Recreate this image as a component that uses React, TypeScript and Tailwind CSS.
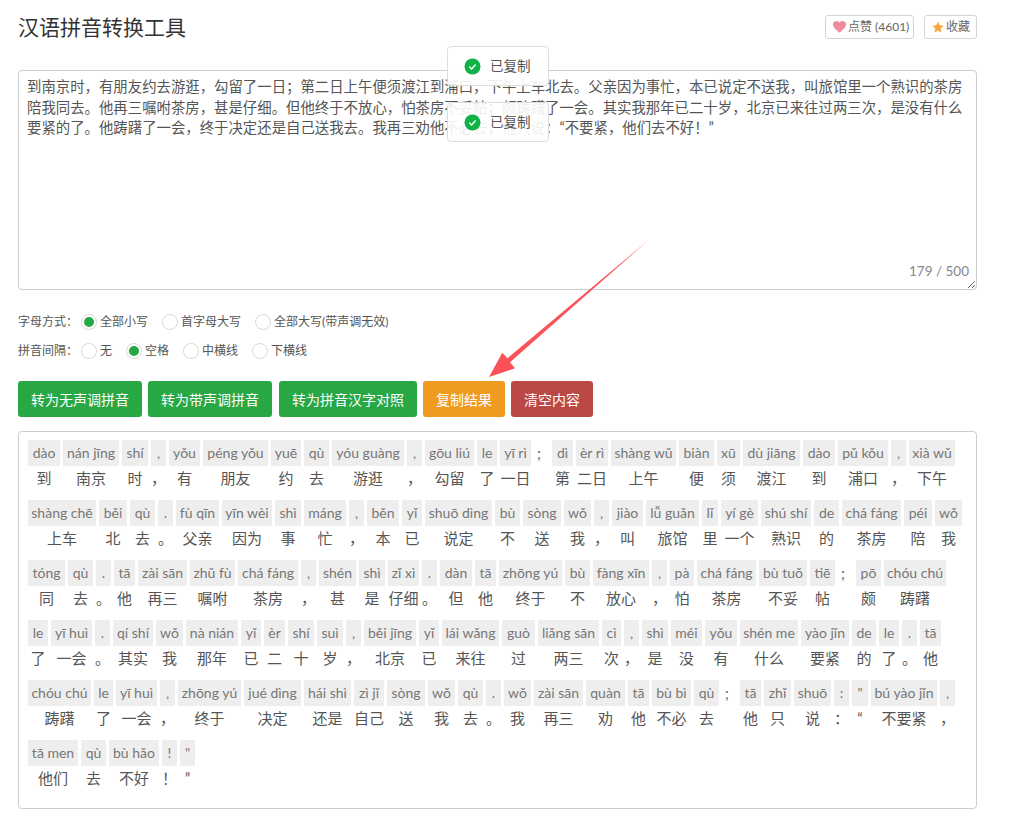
const TEXT =
  "到南京时，有朋友约去游逛，勾留了一日；第二日上午便须渡江到浦口，下午上车北去。父亲因为事忙，本已说定不送我，叫旅馆里一个熟识的茶房陪我同去。他再三嘱咐茶房，甚是仔细。但他终于不放心，怕茶房不妥帖；颇踌躇了一会。其实我那年已二十岁，北京已来往过两三次，是没有什么要紧的了。他踌躇了一会，终于决定还是自己送我去。我再三劝他不必去；他只说：“不要紧，他们去不好！”";

const ROWS: string[] = [
  "dào/到/32 nán_jīng/南京/56 shí/时/26 ,/，/15 yǒu/有/31 péng_yǒu/朋友/65 yuē/约/30 qù/去/25 yóu_guàng/游逛/72 ,/，/15 gōu_liú/勾留/49 le/了/20 yī_rì/一日/31 ; dì/第/21 èr_rì/二日/32 shàng_wǔ/上午/65 biàn/便/35 xū/须/23 dù_jiāng/渡江/57 dào/到/32 pǔ_kǒu/浦口/50 ,/，/15 xià_wǔ/下午/46",
  "shàng_chē/上车/68 běi/北/28 qù/去/25 ./。/15 fù_qīn/父亲/43 yīn_wèi/因为/50 shì/事/26 máng/忙/42 ,/，/15 běn/本/32 yǐ/已/20 shuō_dìng/说定/67 bù/不/25 sòng/送/38 wǒ/我/27 ,/，/15 jiào/叫/31 lǚ_guǎn/旅馆/53 lǐ/里/16 yí_gè/一个/37 shú_shí/熟识/50 de/的/25 chá_fáng/茶房/59 péi/陪/28 wǒ/我/27",
  "tóng/同/37 qù/去/25 ./。/15 tā/他/21 zài_sān/再三/49 zhǔ_fù/嘱咐/45 chá_fáng/茶房/60 ,/，/15 shén/甚/37 shì/是/26 zǐ_xì/仔细/31 ./。/15 dàn/但/32 tā/他/21 zhōng_yú/终于/63 bù/不/25 fàng_xīn/放心/56 ,/，/15 pà/怕/24 chá_fáng/茶房/59 bù_tuǒ/不妥/48 tiē/帖/25 ; pō/颇/25 chóu_chú/踌躇/62",
  "le/了/20 yī_huì/一会/41 ./。/15 qí_shí/其实/40 wǒ/我/27 nà_nián/那年/52 yǐ/已/20 èr/二/21 shí/十/26 suì/岁/26 ,/，/15 běi_jīng/北京/52 yǐ/已/20 lái_wǎng/来往/57 guò/过/33 liǎng_sān/两三/61 cì/次/19 ,/，/15 shì/是/26 méi/没/31 yǒu/有/32 shén_me/什么/58 yào_jǐn/要紧/48 de/的/24 le/了/20 ./。/15 tā/他/21",
  "chóu_chú/踌躇/63 le/了/19 yī_huì/一会/41 ,/，/15 zhōng_yú/终于/63 jué_dìng/决定/57 hái_shì/还是/47 zì_jǐ/自己/30 sòng/送/38 wǒ/我/27 qù/去/25 ./。/15 wǒ/我/27 zài_sān/再三/49 quàn/劝/39 tā/他/21 bù_bì/不必/39 qù/去/25 ; tā/他/21 zhǐ/只/27 shuō/说/37 :/：/15 \"/“/16 bú_yào_jǐn/不要紧/66 ,/，/15",
  "tā_men/他们/50 qù/去/25 bù_hǎo/不好/50 !/！/15 \"/”/15",
];

function Token({ t }: { t: string }) {
  if (t === ";") {
    return (
      <div className="h-[26px] w-[15px] pl-[3px] text-[15px] leading-[26px] text-[#666]">;</div>
    );
  }
  const [py, hz, w] = t.split("/");
  return (
    <div className="flex flex-col items-center" style={{ width: Number(w) }}>
      <div className="h-[26px] w-full whitespace-nowrap bg-[#eeeeee] text-center leading-[26px] text-[#777]">
        {py.replace(/_/g, " ")}
      </div>
      <div className="-mt-[1px] h-[26px] whitespace-nowrap text-center text-[15px] leading-[26px] text-[#555]">{hz}</div>
    </div>
  );
}

function Radio({ label, on }: { label: string; on?: boolean }) {
  return (
    <div className="flex items-center gap-[3px]">
      <span className="flex h-[16px] w-[16px] items-center justify-center rounded-full border border-[#d9d9d9] bg-white">
        {on ? <span className="h-[10px] w-[10px] rounded-full bg-[#28a745]" /> : null}
      </span>
      <span>{label}</span>
    </div>
  );
}

function Toast({ cls }: { cls: string }) {
  return (
    <div className={`absolute left-[447px] flex h-[40px] w-[102px] items-center rounded-[4px] border border-[#dddddd] bg-white/90 pl-[16px] text-[13.5px] text-[#555] ${cls}`}>
      <svg width="17" height="17" viewBox="0 0 17 17" className="mr-[9px]">
        <circle cx="8.5" cy="8.5" r="8" fill="#0fb344" />
        <path d="M5.3 8.7 L7.6 10.9 L11.6 6.6" fill="none" stroke="#fff" strokeWidth="1.4" />
      </svg>
      已复制
    </div>
  );
}

export default function App() {
  return (
    <div className="relative min-h-[820px] bg-white pl-[18px] [font-family:Lato,'Noto_Sans_CJK_SC',sans-serif] text-[14px] text-[#333]">
      <div className="w-[959px]">
        <header className="flex h-[70px] items-start justify-between pt-[15px]">
          <h1 className="-mt-[1px] text-[21px] leading-[26px] font-normal text-[#333]">汉语拼音转换工具</h1>
          <div className="flex gap-[10px] text-[12px] text-[#666]">
            <button className="flex h-[24px] w-[89px] items-center gap-[2px] rounded-[3px] border border-[#d4d4d4] bg-white pl-[7px]">
              <svg width="13" height="12" viewBox="0 0 24 22"><path d="M12 21.5 C4 15 0 11 0 6.5 C0 2.5 3 0 6.5 0 C9 0 11 1.3 12 3.3 C13 1.3 15 0 17.5 0 C21 0 24 2.5 24 6.5 C24 11 20 15 12 21.5Z" fill="#ee8ba0" /></svg>
              点赞 (4601)
            </button>
            <button className="flex h-[24px] w-[53px] items-center gap-[2px] rounded-[3px] border border-[#d4d4d4] bg-white pl-[7px]">
              <svg width="12" height="12" viewBox="0 0 24 24"><path d="M12 1 L15.4 8.4 L23.5 9.3 L17.5 14.8 L19.1 22.8 L12 18.8 L4.9 22.8 L6.5 14.8 L0.5 9.3 L8.6 8.4Z" fill="#f9a83c" /></svg>
              收藏
            </button>
          </div>
        </header>

        <div className="relative h-[220px]">
          <textarea
            readOnly
            value={TEXT}
            className="block h-[220px] w-full resize-y rounded-[4px] border border-[#cccccc] bg-white px-[8px] py-[6px] text-[14.4px] leading-[20.5px] text-[#555] outline-none"
          />
          <span className="absolute right-[8px] bottom-[10px] text-[13.5px] leading-[18px] text-[#888]">179 / 500</span>
        </div>

        <div className="mt-[24px] flex h-[16px] items-center text-[12px] text-[#555]">
          <span className="w-[63px]">字母方式：</span>
          <div className="flex gap-[14px]">
            <Radio label="全部小写" on />
            <Radio label="首字母大写" />
            <Radio label="全部大写(带声调无效)" />
          </div>
        </div>
        <div className="mt-[13px] flex h-[16px] items-center text-[12px] text-[#555]">
          <span className="w-[63px]">拼音间隔：</span>
          <div className="flex gap-[14px]">
            <Radio label="无" />
            <Radio label="空格" on />
            <Radio label="中横线" />
            <Radio label="下横线" />
          </div>
        </div>

        <div className="mt-[22px] flex gap-[6px] text-[14px] text-white">
          <button className="h-[36px] w-[124px] rounded-[3px] bg-[#28a745]">转为无声调拼音</button>
          <button className="h-[36px] w-[124px] rounded-[3px] bg-[#28a745]">转为带声调拼音</button>
          <button className="ml-[1px] h-[36px] w-[138px] rounded-[3px] bg-[#28a745]">转为拼音汉字对照</button>
          <button className="h-[36px] w-[82px] rounded-[3px] bg-[#ef9b20]">复制结果</button>
          <button className="h-[36px] w-[82px] rounded-[3px] bg-[#bb4845]">清空内容</button>
        </div>

        <div className="mt-[14px] h-[378px] rounded-[4px] border border-[#cccccc] bg-white pt-[8px] pl-[9px]">
          {ROWS.map((row, i) => (
            <div key={i} className="mb-[9px] flex gap-[3px]">
              {row.split(" ").map((t, j) => (
                <Token key={j} t={t} />
              ))}
            </div>
          ))}
        </div>
      </div>

      <Toast cls="top-[46px]" />
      <Toast cls="top-[102px]" />

      <svg className="pointer-events-none absolute top-0 left-0" width="1011" height="820">
        <polygon points="648,240.5 507.3,358.3 502.3,352.7 489,377 515,368.3 510,362.3" fill="#fb5257" />
      </svg>
    </div>
  );
}
